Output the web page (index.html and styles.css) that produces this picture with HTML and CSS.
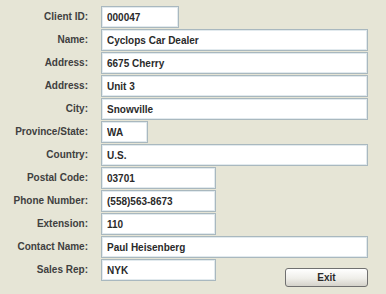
FILE: index.html
```html
<!DOCTYPE html>
<html>
<head>
  <link rel="stylesheet" href="styles.css">
</head>
<body>

  <div class="client-form">
    <label for="clientId">Client ID:</label>
    <input type="text" id="clientId" class="short" value="000047">

    <label for="name">Name:</label>
    <input type="text" id="name" class="full" value="Cyclops Car Dealer">

    <label for="address1">Address:</label>
    <input type="text" id="address1" class="full" value="6675 Cherry">

    <label for="address2">Address:</label>
    <input type="text" id="address2" class="full" value="Unit 3">

    <label for="city">City:</label>
    <input type="text" id="city" class="full" value="Snowville">

    <label for="province">Province/State:</label>
    <input type="text" id="province" class="tiny" value="WA">

    <label for="country">Country:</label>
    <input type="text" id="country" class="full" value="U.S.">

    <label for="postal">Postal Code:</label>
    <input type="text" id="postal" class="medium" value="03701">

    <label for="phone">Phone Number:</label>
    <input type="text" id="phone" class="medium" value="(558)563-8673">

    <label for="extension">Extension:</label>
    <input type="text" id="extension" class="medium" value="110">

    <label for="contact">Contact Name:</label>
    <input type="text" id="contact" class="full" value="Paul Heisenberg">

    <label for="salesRep">Sales Rep:</label>
    <div class="last-row">
      <input type="text" id="salesRep" class="medium" value="NYK">
      <button class="exit-button">Exit</button>
    </div>
  </div>

</body>
</html>
```

FILE: styles.css
```css
body {
  font-family: 'Liberation Sans', Arial, sans-serif;
  font-weight: bold;
  font-size: 10px;
  background-color: #e6e5d6;
  margin: 0;
  padding: 6px 0 0 0;
  color: #404040;
}

.client-form {
  display: grid;
  grid-template-columns: 88px 267px;
  column-gap: 13px;
  row-gap: 1px;
  align-items: start;
}

.client-form label {
  text-align: right;
  line-height: 22px;
}

.client-form input {
  height: 22px;
  box-sizing: border-box;
  border: 1px solid #a9b8bf;
  box-shadow: inset 0 0 0 1px #e2eaee;
  background: #ffffff;
  padding: 0 5px;
  margin: 0;
  font-family: inherit;
  font-weight: bold;
  font-size: 10px;
  color: #2a2a2a;
}

.short {
  width: 78px;
}

.full {
  width: 267px;
}

.tiny {
  width: 47px;
}

.medium {
  width: 115px;
}

.last-row {
  display: flex;
  justify-content: space-between;
  align-items: flex-start;
}

.exit-button {
  margin-top: 9px;
  width: 83px;
  height: 19px;
  border: 1px solid #707070;
  border-radius: 3px;
  background: linear-gradient(#ffffff, #efeee9 55%, #d4d2ca);
  font-family: inherit;
  font-weight: bold;
  font-size: 10px;
  color: #2a2a2a;
  padding: 0;
}
```
